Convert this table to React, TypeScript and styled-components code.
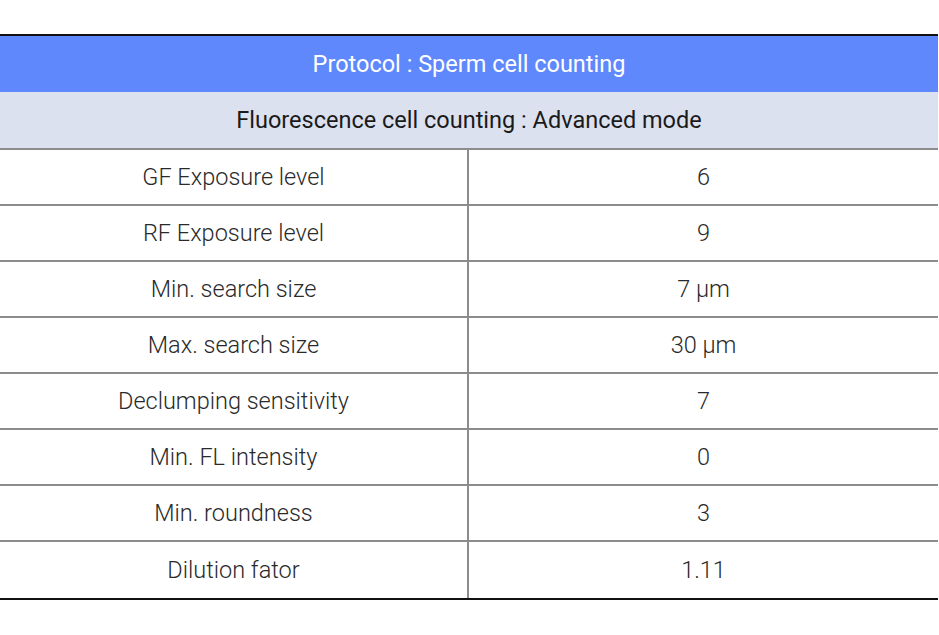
import React from "react";
import styled, { createGlobalStyle } from "styled-components";

const Global = createGlobalStyle`
  html, body { margin: 0; padding: 0; background: #ffffff; }
  body { font-family: Roboto, "Liberation Sans", sans-serif; }
`;

const Page = styled.div`
  width: 939px;
  height: 635px;
  padding-top: 34px;
  box-sizing: border-box;
  background: #fff;
`;

const Table = styled.div`
  width: 938px;
  border-top: 2px solid #111;
  border-bottom: 2px solid #111;
  display: flex;
  flex-direction: column;
`;

const TitleBar = styled.div<{ $tone: "primary" | "secondary" }>`
  height: 56px;
  display: flex;
  align-items: center;
  justify-content: center;
  font-size: 23.5px;
  font-weight: 400;
  background: ${(p) => (p.$tone === "primary" ? "#6088fd" : "#dce1f0")};
  color: ${(p) => (p.$tone === "primary" ? "#ffffff" : "#1a1a1a")};
  box-sizing: border-box;
  ${(p) => p.$tone === "secondary" && "border-bottom: 2px solid #8c8c8c; height: 58px;"}
`;

const Row = styled.div<{ $last?: boolean }>`
  display: grid;
  grid-template-columns: 467px 2px 1fr;
  height: 56px;
  box-sizing: border-box;
  border-bottom: ${(p) => (p.$last ? "none" : "2px solid #8c8c8c")};
`;

const Cell = styled.div`
  display: flex;
  align-items: center;
  justify-content: center;
  font-size: 23.5px;
  color: #2a2a2a;
  font-weight: 300;
`;

const Divider = styled.div`
  background: #8c8c8c;
`;

const rows: [string, string][] = [
  ["GF Exposure level", "6"],
  ["RF Exposure level", "9"],
  ["Min. search size", "7 μm"],
  ["Max. search size", "30 μm"],
  ["Declumping sensitivity", "7"],
  ["Min. FL intensity", "0"],
  ["Min. roundness", "3"],
  ["Dilution fator", "1.11"],
];

export default function App() {
  return (
    <Page>
      <Global />
      <Table>
        <TitleBar $tone="primary">Protocol : Sperm cell counting</TitleBar>
        <TitleBar $tone="secondary">Fluorescence cell counting : Advanced mode</TitleBar>
        {rows.map(([label, value], i) => (
          <Row key={label} $last={i === rows.length - 1}>
            <Cell>{label}</Cell>
            <Divider />
            <Cell>{value}</Cell>
          </Row>
        ))}
      </Table>
    </Page>
  );
}
